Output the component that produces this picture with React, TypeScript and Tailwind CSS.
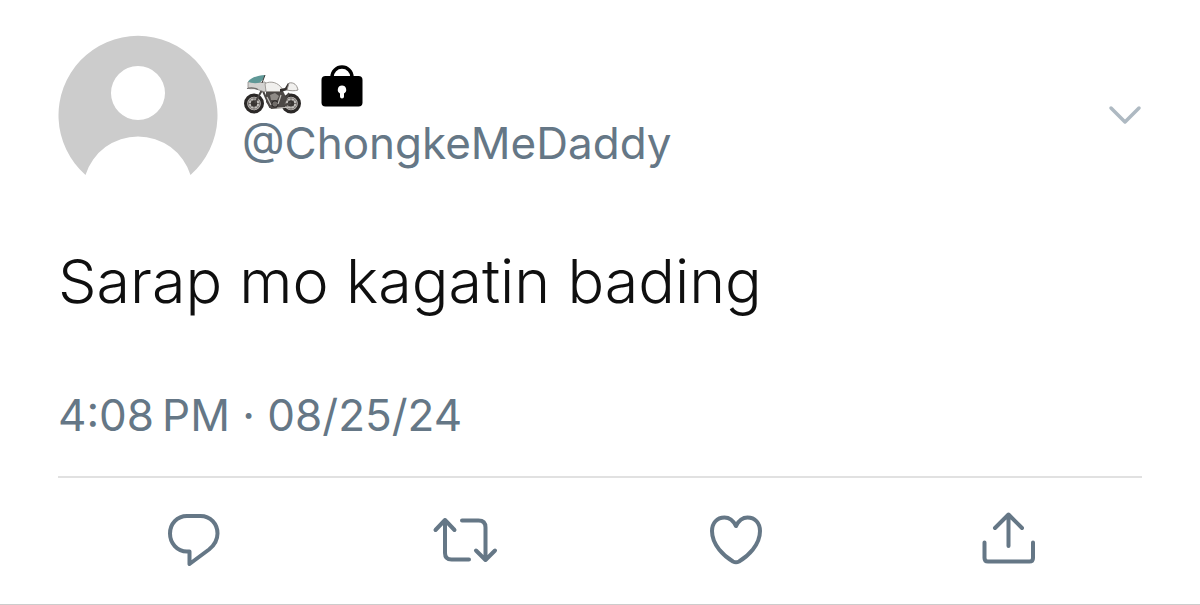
import type { ReactNode } from 'react'

const META = 'font-normal text-[44px] leading-14 text-[#657786]'

function Avatar() {
  return (
    <svg viewBox="0 0 160 140" className="w-40 h-35 shrink-0" role="img" aria-label="Profile picture">
      <path
        fill="#cccccc"
        fillRule="evenodd"
        d="M27.5 140A79.5 79.5 0 1 1 132.5 140A55 55 0 0 0 27.5 140ZM80 31a27 27 0 1 0 0 54a27 27 0 1 0 0-54Z"
      />
    </svg>
  )
}

function Motorcycle() {
  return (
    <svg viewBox="0 0 60 42" className="w-15 h-[42px]" role="img" aria-label="Motorcycle">
      {/* wheels */}
      {[12, 49].map(cx => (
        <g key={cx} fill="none">
          <circle cx={cx} cy="30.5" r="8.4" fill="#c4c1be" stroke="#2b2827" strokeWidth="3.2" />
          <circle cx={cx} cy="30.5" r="5.6" stroke="#77726f" strokeWidth="0.9" />
          <path d={`M${cx - 6} 30.5h12M${cx} 24.5v12M${cx - 4} 26.5l8 8M${cx + 4} 26.5l-8 8`} stroke="#6a6562" strokeWidth="0.9" />
          <circle cx={cx} cy="30.5" r="3.2" fill="#393533" />
        </g>
      ))}
      {/* frame and engine */}
      <path d="M20 17L13 30M21 18l7 16h12l7-14M39 34l10-4" fill="none" stroke="#4a4644" strokeWidth="2" />
      <path d="M24 18h17l3 6-3 11-12 1-5-7Z" fill="#4c4846" />
      <path d="M28 22l5-2 4 3-2 4h-6Z" fill="#8f8b87" />
      <circle cx="33" cy="31" r="3.2" fill="#706c69" stroke="#262322" />
      <path d="M25 24l4 8M39 22l-3 9M35 35l17-1" stroke="#c4c1bd" strokeWidth="1.2" />
      {/* bodywork */}
      <path d="M6 9c3-1 10 1 17 0l3 4-3 6-9-3C10 15 7 17 6 14Z" fill="#d3d2d0" stroke="#8f8c89" strokeWidth="0.8" />
      <path d="M5 15.500c4-1 7-1 11 1" fill="none" stroke="#6d6a68" strokeWidth="1.2" />
      <path d="M23 10.500c6-3 13-1 17 5l-2 3H24Z" fill="#f0efed" stroke="#97938f" strokeWidth="0.9" />
      <path d="M38 16l5-1 3-5 3 1-3 6-8 2Z" fill="#34302f" />
      <path d="M47 10c5-1 8 2 9 7-3 1-7 1-11 0Z" fill="#f1f0ee" stroke="#8d8986" strokeWidth="0.9" />
      <path d="M6 8.500C10 4 16 2.500 23 2l-2 4.500-3 3C13 11 9 10 6 8.500Z" fill="#5f9897" />
      <path d="M23 2l-3 8" stroke="#393533" strokeWidth="1" />
    </svg>
  )
}

function Lock() {
  return (
    <svg viewBox="0 0 42 42" className="size-[42px] mb-2" role="img" aria-label="Protected account">
      <path d="M11 13v-1a10 10 0 0 1 20 0v1" fill="none" stroke="#000" strokeWidth="3.4" />
      <rect x="0.5" y="11" width="41" height="30.5" rx="4" />
      <path d="M21 20.500a4.200 4.200 0 0 1 2 7.900v3.200a2 2 0 0 1-4 0v-3.200a4.200 4.200 0 0 1 2-7.900Z" fill="#fff" />
    </svg>
  )
}

const ACTIONS: { label: string; icon: ReactNode }[] = [
  {
    label: 'Reply',
    icon: <path d="M25 8h13.500C48.500 8 55.500 16 55.500 25.500c0 7-3.500 12-8.500 16L27.500 56V43.500H25C15 43.500 8 35 8 25.500S15 8 25 8Z" />,
  },
  {
    label: 'Retweet',
    icon: <path d="M2.500 22L12 12l9.500 10M12 12v33q0 6.500 6.500 6.500H36M29 12.500h16.500q7 0 7 7V52M43 42.500l9.500 9.500 9.500-9.500" />,
  },
  {
    label: 'Like',
    icon: <path d="M32 18C29 12 25 9.500 20.500 9.500C13 9.500 8 15 8 23c0 14 12 25 21 30.500q3 1.500 6 0C44 48 56 37 56 23c0-8-5-13.500-12.500-13.500C39 9.500 35 12 32 18Z" />,
  },
  {
    label: 'Share',
    icon: <path d="M20 20L33.500 6.500 47 20M33.500 6.500V38M9.500 34.500V50q0 3.500 3.500 3.500h41.500q3.500 0 3.500-3.500V34.500" />,
  },
]

export default function App() {
  return (
    <article className="bg-white border-b border-[#cccccc] px-[58px] pt-[35px] font-[Inter,'Liberation_Sans',sans-serif]">
      <header className="flex items-start gap-6">
        <Avatar />
        <div className="flex-1 pt-[30px]">
          <div className="flex items-end gap-[19px] h-[50px]">
            <Motorcycle />
            <Lock />
          </div>
          <a href="#profile" className={META}>@ChongkeMeDaddy</a>
        </div>
        <button aria-label="More" className="mt-[62px] w-[34px] h-9">
          <svg viewBox="0 0 34 36" fill="none" stroke="#aeb9c2" strokeWidth="3.5" strokeLinecap="round" strokeLinejoin="round">
            <path d="M3 11L17 25 31 11" />
          </svg>
        </button>
      </header>

      <p className="mt-16 text-[61px] leading-21 font-light text-[#0f0f0f]">Sarap mo kagatin bading</p>

      <div className="mt-16 pb-[33px] border-b-2 border-[#e1e1e1]">
        <time dateTime="2024-08-25T16:08" className={META}>4:08{'\u202f'}PM · 08/25/24</time>
      </div>

      {/* Actions */}
      <div className="grid grid-cols-4 justify-items-center pt-[30px] pb-8">
        {ACTIONS.map(({ label, icon }) => (
          <button key={label} aria-label={label} className="size-16">
            <svg viewBox="0 0 64 64" fill="none" stroke="#657786" strokeWidth="4" strokeLinecap="round" strokeLinejoin="round" className="overflow-visible">
              {icon}
            </svg>
          </button>
        ))}
      </div>
    </article>
  )
}
